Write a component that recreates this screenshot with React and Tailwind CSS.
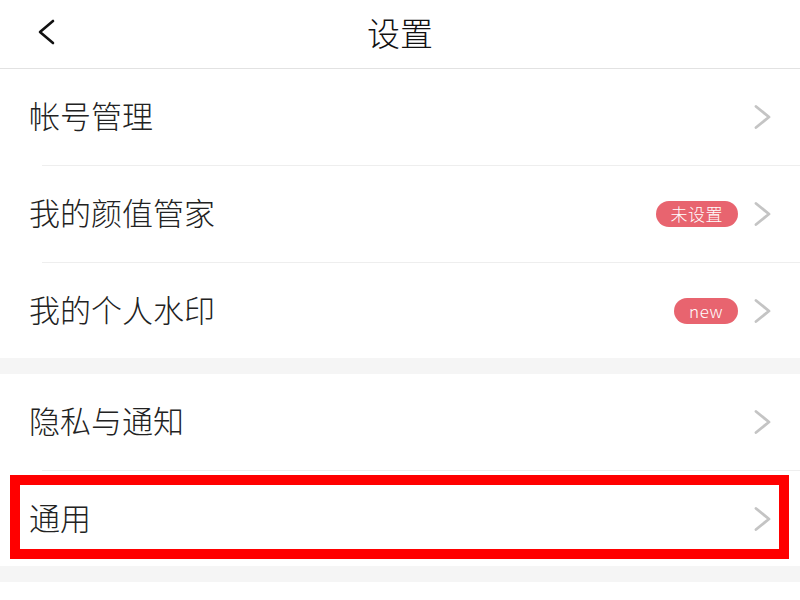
const font = { fontFamily: '"Noto Sans CJK SC", "Noto Sans", sans-serif' }

function Chevron({ className }) {
  return (
    <svg width="18" height="26" viewBox="0 0 18 26" fill="none" className={className}>
      <polyline points="2,2.5 15,13 2,23.5" stroke="currentColor" strokeWidth="2.8" strokeLinecap="round" strokeLinejoin="round" />
    </svg>
  )
}

function Badge({ children }) {
  return (
    <span className="flex h-[26px] items-center justify-center rounded-full bg-[#e8646f] px-[15px] pb-px text-[17px] font-light leading-none tracking-[0.5px] text-white">
      {children}
    </span>
  )
}

function Row({ label, badge, height = 'h-[96px]', highlight = false }) {
  return (
    <div className={`relative flex ${height} items-center bg-white pb-[5px] pl-[29px] pr-[28px]`}>
      <span className="flex-1 text-[31px] font-light leading-none text-[#222222]">{label}</span>
      {badge && <div className="mr-[16px] mt-[5px]">{badge}</div>}
      <Chevron className="mt-[5px] text-[#c4c4c4]" />
      {highlight && (
        <div className="absolute left-[10px] right-[11px] top-[4px] bottom-[7px] border-[10px] border-[#ff0000]" />
      )}
    </div>
  )
}

function Divider() {
  return (
    <div className="bg-white">
      <div className="ml-[42px] h-px bg-[#eeeeee]" />
    </div>
  )
}

export default function App() {
  return (
    <div className="h-[600px] w-[800px] overflow-hidden bg-white" style={font}>
      <header className="relative flex h-[69px] items-center justify-center border-b border-[#e2e2e2] pb-[4px]">
        <svg width="20" height="28" viewBox="0 0 20 28" fill="none" className="absolute left-[37px] top-[18px] text-[#111111]">
          <polyline points="16,3 3,14 16,25" stroke="currentColor" strokeWidth="2.6" strokeLinecap="round" strokeLinejoin="round" />
        </svg>
        <h1 className="text-[33px] font-light leading-none text-[#111111]">设置</h1>
      </header>

      <Row label="帐号管理" />
      <Divider />
      <Row label="我的颜值管家" badge={<Badge>未设置</Badge>} />
      <Divider />
      <Row label="我的个人水印" badge={<Badge>new</Badge>} height="h-[95px]" />

      <div className="h-[16px] bg-[#f5f5f5]" />

      <Row label="隐私与通知" />
      <Divider />
      <Row label="通用" height="h-[95px]" highlight />

      <div className="h-[16px] bg-[#f5f5f5]" />
    </div>
  )
}
